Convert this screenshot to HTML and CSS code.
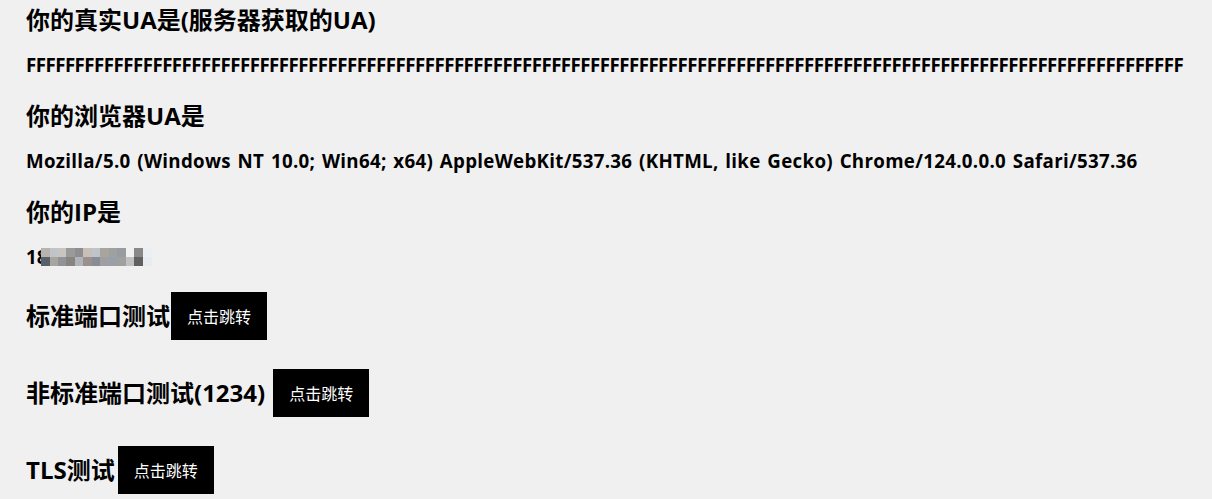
FILE: index.html
```html
<!DOCTYPE html>
<html lang="zh-CN">
<head>
<meta charset="utf-8">
<title>UA</title>
<link rel="stylesheet" href="styles.css">
</head>
<body>
<main class="page">
  <h2 class="title">你的真实UA是(服务器获取的UA)</h2>
  <p class="value value-f">FFFFFFFFFFFFFFFFFFFFFFFFFFFFFFFFFFFFFFFFFFFFFFFFFFFFFFFFFFFFFFFFFFFFFFFFFFFFFFFFFFFFFFFFFFFFFFFFFFFFFFFFFFFFFFFFFFFFFFF</p>
  <h2 class="title">你的浏览器UA是</h2>
  <p class="value value-ua">Mozilla/5.0 (Windows NT 10.0; Win64; x64) AppleWebKit/537.36 (KHTML, like Gecko) Chrome/124.0.0.0 Safari/537.36</p>
  <h2 class="title">你的IP是</h2>
  <p class="value ip"><span class="ip-text">18</span><span class="mosaic"></span></p>
  <h2 class="test test-1">标准端口测试<a class="btn" href="#">点击跳转</a></h2>
  <h2 class="test test-2">非标准端口测试(1234)<a class="btn" href="#">点击跳转</a></h2>
  <h2 class="test test-3">TLS测试<a class="btn" href="#">点击跳转</a></h2>
</main>
</body>
</html>
```
FILE: styles.css
```css
html, body {
  margin: 0;
  background: #f0f0f0;
}
body {
  font-family: "Open Sans", "Noto Sans CJK SC", sans-serif;
  color: #000;
}
.page {
  padding: 4px 26px 0;
}
.title {
  font-size: 24px;
  line-height: 32px;
  font-weight: 700;
  margin: 0;
}
.value {
  font-size: 18.72px;
  line-height: 24px;
  font-weight: 700;
  margin: 17px 0 23px;
  white-space: nowrap;
}
.value-f {
  letter-spacing: -0.54px;
}
.value-ua {
  letter-spacing: 0.3px;
  word-spacing: 1.6px;
}
.ip {
  display: flex;
  align-items: center;
}
.mosaic {
  display: inline-block;
  width: 111px;
  height: 18px;
  margin-left: -6px;
  background:
    linear-gradient(90deg,
      #b8b3ad 0 8.5px, #c0c4c8 8.5px 17px, #c8c4c0 17px 25.5px, #9a9a9a 25.5px 34px,
      #8e8e90 34px 42.5px, #c8c0b8 42.5px 51px, #c0c4c8 51px 59.5px, #a8a4a0 59.5px 68px,
      #a0a0a0 68px 76.5px, #989ca0 76.5px 85px, #f0f0f0 85px 93.5px, #888888 93.5px 102px,
      #eceff2 102px 111px) top / 100% 9px no-repeat,
    linear-gradient(90deg,
      #58606a 0 8.5px, #a8a4a0 8.5px 17px, #909498 17px 25.5px, #888480 25.5px 34px,
      #b0b4b8 34px 42.5px, #9a9090 42.5px 51px, #888c94 51px 59.5px, #a0a0a0 59.5px 68px,
      #98a0a8 68px 76.5px, #a0a0a0 76.5px 85px, #c0c0c0 85px 93.5px, #606060 93.5px 102px,
      #e8ecf0 102px 111px) bottom / 100% 9px no-repeat;
}
.test {
  display: flex;
  align-items: center;
  font-size: 24px;
  line-height: 32px;
  font-weight: 700;
  margin: 0;
}
.test-1 { margin-top: 23px; }
.test-2 { margin-top: 29px; }
.test-3 { margin-top: 29px; }
.test-1 .btn { margin-left: 1px; }
.test-2 .btn { margin-left: 8px; }
.test-3 .btn { margin-left: 3px; }
.btn {
  display: inline-block;
  background: #000;
  color: #fff;
  text-decoration: none;
  font-size: 16px;
  font-weight: 400;
  line-height: 24px;
  padding: 12px 16px;
  font-family: "Noto Sans CJK SC", sans-serif;
}
```
